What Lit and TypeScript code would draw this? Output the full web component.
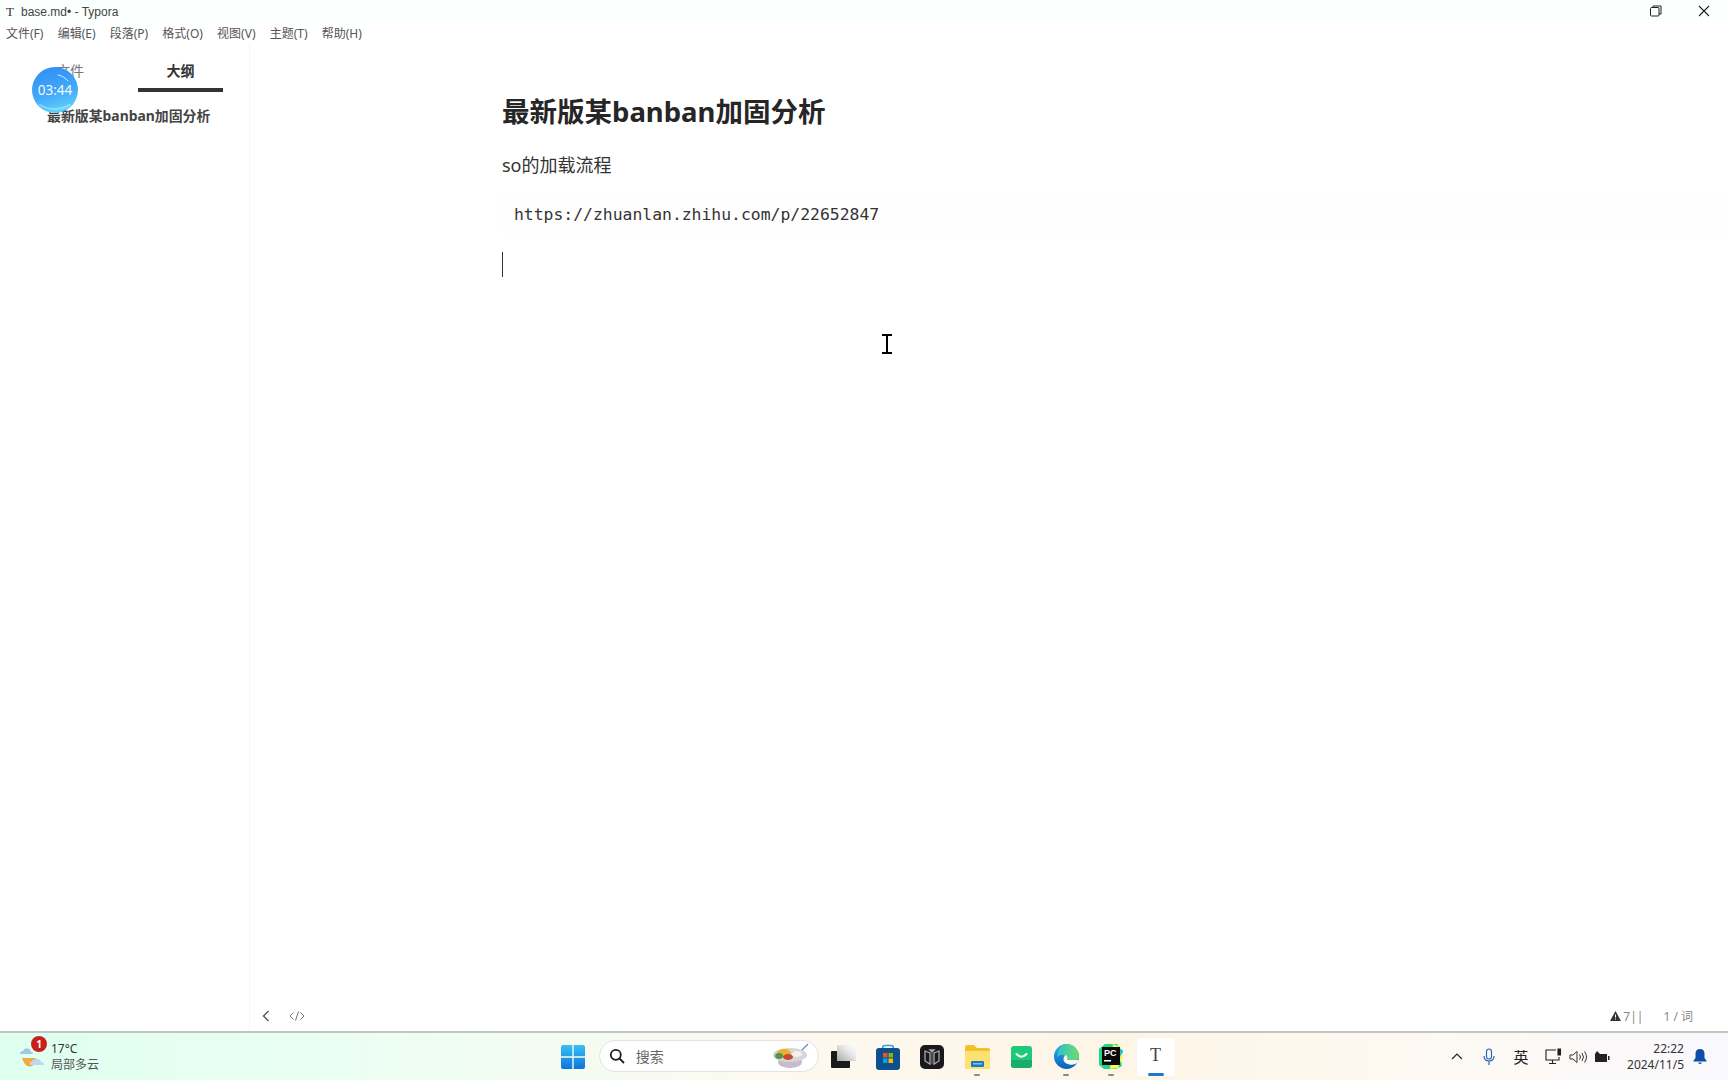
import { LitElement, html, css, svg } from "lit";
import { customElement } from "lit/decorators.js";

const store = svg`<svg width="24" height="26" viewBox="0 0 24 26"><path d="M6.500 6V4q0-2.500 2.500-2.500h6Q17.500 1.500 17.500 4v2" fill="none" stroke="#38a0e0" stroke-width="1.500"/><rect y="4" width="24" height="22" rx="3" fill="#0f4f8f"/><rect x="7" y="9" width="4.500" height="4.500" fill="#f25022"/><rect x="12.500" y="9" width="4.500" height="4.500" fill="#7fba00"/><rect x="7" y="14.500" width="4.500" height="4.500" fill="#00a4ef"/><rect x="12.500" y="14.500" width="4.500" height="4.500" fill="#ffb900"/></svg>`;
const dark = svg`<svg width="24" height="24" viewBox="0 0 24 24"><rect width="24" height="24" rx="5" fill="#19191b"/><path d="M5 6l5 2v11l-5-3zM19 6l-5 2v11l5-3zM10 5h4l-2 2z" fill="none" stroke="#a9a9ab" stroke-width="1.300"/><path d="M12 8v11" stroke="#77777a"/></svg>`;
const folder = svg`<svg width="25" height="24" viewBox="0 0 25 24"><path d="M0 2q0-2 2-2h7l3 3h11q2 0 2 2v17q0 2-2 2H2q-2 0-2-2z" fill="#f5c02e"/><path d="M0 6h25v16q0 2-2 2H2q-2 0-2-2z" fill="#fde272"/><rect x="6" y="16" width="13" height="6" rx="1" fill="#1e78c8"/><rect x="8" y="18" width="9" height="1.500" fill="#7cc0f0"/></svg>`;
const green = svg`<svg width="21" height="22" viewBox="0 0 21 22"><rect width="21" height="22" rx="3" fill="#21c87a"/><path d="M0 14h21v5q0 3-3 3H3q-3 0-3-3z" fill="#18ad68"/><path d="M5.500 8q5 5.500 10 0" fill="none" stroke="#e8fff3" stroke-width="2" stroke-linecap="round"/></svg>`;
const edge = svg`<svg width="25" height="25" viewBox="0 0 25 25"><defs><linearGradient id="eg" x1="0" y1="0" x2="0" y2="1"><stop offset="0" stop-color="#2fb6e6"/><stop offset=".55" stop-color="#1683d8"/><stop offset="1" stop-color="#0f5fb0"/></linearGradient><linearGradient id="eg2" x1="0" y1="0" x2="1" y2="0"><stop offset="0" stop-color="#2fc4c8"/><stop offset="1" stop-color="#6fdc6a"/></linearGradient></defs><circle cx="12.500" cy="12.500" r="12.500" fill="url(#eg)"/><path d="M10 .3A12.500 12.500 0 0 1 25 12.500q0 3.500-4 3.500h-7.500q-.5-4-4-5C6 10 4 12 3.500 14 3 7 6 2 10 .3z" fill="url(#eg2)"/><path d="M9.500 15.500q0-4 3-4.500 1 1.500 1 5h11q-.3 1.500-1 3-4 2.500-8 1.500-6-1.500-6-5z" fill="#fdf6ea"/></svg>`;
const pycharm = svg`<svg width="26" height="27" viewBox="0 0 26 27"><path d="M1 6l6-5h12l6 7-2 9 1 6-6 3H6l-5-4z" fill="#21d789"/><path d="M15 1l8 3 2 9-5 12-8 1z" fill="#fcf84a"/><path d="M20 4l5 4-3 6z" fill="#07c3f2"/><rect x="4" y="4" width="18" height="18" fill="#0a0a0a"/><text x="6" y="13" font-family="Liberation Sans" font-weight="700" font-size="9" fill="#fff">PC</text><rect x="6" y="17" width="7" height="1.500" fill="#fff"/></svg>`;

@customElement("app-root")
export class AppRoot extends LitElement {
  static styles = css`
    :host { display: block; width: 1728px; height: 1080px; position: relative; overflow: hidden; background: #fff;
      font-family: "Noto Sans", "Noto Sans CJK SC", sans-serif; color: #333; }
    .page { display: flex; flex-direction: column; height: 1080px; }
    .titlebar { display: flex; align-items: center; height: 22px; padding: 1px 0 0 6px; box-sizing: border-box; background: #fbfffe; font-size: 12px; color: #444; flex: none;
      font-family: "Liberation Sans", "Noto Sans CJK SC", sans-serif; }
    .t { font-family: "Liberation Serif", serif; font-size: 13px; width: 15px; color: #333; }
    .winbtns { margin-left: auto; display: flex; align-items: center; margin-top: -1px; }
    .winbtn { width: 48px; height: 22px; display: flex; align-items: center; justify-content: center; }
    .menubar { display: flex; gap: 14.200px; height: 22px; padding-left: 6px; align-items: center; font-size: 12px; color: #555; background: #fff; flex: none; }
    .main { flex: 1; display: flex; min-height: 0; }
    .side { width: 250px; flex: none; border-right: 1px solid #f6f6f6; box-sizing: border-box; position: relative; }
    .tabs { display: grid; grid-template-columns: 138px 85px; height: 48px; }
    .tab { font-size: 14px; text-align: center; padding-top: 17px; line-height: 20px; box-sizing: border-box; color: #777; }
    .tab.file { padding-left: 2px; }
    .tab.on { font-weight: 700; color: #333; border-bottom: 4px solid #333; }
    .outline { padding: 14px 0 0 47px; font-size: 13.900px; font-weight: 700; line-height: 20px; color: #444; }
    .bubble { position: absolute; left: 32px; top: 23px; width: 46px; height: 46px; border-radius: 50%;
      background: linear-gradient(165deg, #2f8df5 0%, #42a8f9 55%, #6cdcfc 100%); color: #f2faff; font-size: 13.500px;
      display: flex; align-items: center; justify-content: center; overflow: hidden; }
    .gloss { position: absolute; left: 0; top: 0; }
    .editor { flex: 1; display: flex; flex-direction: column; min-width: 0; }
    .doc { flex: 1; padding: 47px 0 0 252px; }
    h1 { margin: 0; font-size: 27.500px; line-height: 42px; font-weight: 700; color: #262626; }
    p { margin: 18px 0 0; font-size: 18px; line-height: 28px; color: #333; }
    .code { margin-top: 13px; height: 44px; padding-left: 12px; display: flex; align-items: center; background: #fefefe;
      font-family: "DejaVu Sans Mono", monospace; font-size: 16.400px; color: #333; }
    .caret { margin-top: 16px; width: 1px; height: 25px; background: #333; }
    .foot { height: 38px; flex: none; display: flex; align-items: center; padding: 8px 35px 0 11px; box-sizing: border-box; color: #777; }
    .foot .code-ic { margin-left: 18px; }
    .stats { margin-left: auto; display: flex; align-items: center; font-size: 12px; color: #888; }
    .stats .w { margin-right: 2px; }
    .stats .wc { margin-left: 20px; }
    .taskbar { height: 49px; flex: none; box-sizing: border-box; border-top: 2px solid #c2c6c2; display: flex; align-items: center;
      background: linear-gradient(90deg, #deffef 0%, #eafff4 18%, #fdf9f0 45%, #fdf5e6 65%, #fdf9f2 82%, #f9f8fd 100%); position: relative; }
    .weather { width: 551px; flex: none; display: flex; align-items: center; padding-left: 19px; box-sizing: border-box; position: relative; }
    .wtext { margin-left: 6px; font-size: 12px; line-height: 16px; color: #333; }
    .wtext div:last-child { color: #555; }
    .badge { position: absolute; left: 31px; top: -5px; width: 16px; height: 16px; border-radius: 50%; background: #c8201c; color: #fff;
      font-size: 10px; font-weight: 700; display: flex; align-items: center; justify-content: center; }
    .cell { width: 44.700px; height: 47px; flex: none; display: flex; align-items: center; justify-content: center; position: relative; box-sizing: border-box; }
    .dot::after { content: ""; position: absolute; left: 19px; bottom: 4px; width: 6px; height: 2px; border-radius: 1px; background: #8a8a8a; }
    .search { width: 220px; height: 32px; flex: none; margin: -2px 2px 0 3px; box-sizing: border-box; border: 1px solid #e2e2e0; border-radius: 16px; background: #fff;
      display: flex; align-items: center; padding-left: 9px; font-size: 14px; color: #666; }
    .search span { margin-left: 11px; }
    .search svg:last-child { margin-left: auto; margin-right: 8px; }
    .active { width: 38px; height: 38px; margin: 0 3px; background: #fff; border-radius: 4px; font-family: "Liberation Serif", serif; font-size: 18px; color: #444; padding-bottom: 3px; }
    .active::after { content: ""; position: absolute; left: 11px; bottom: 0; width: 16px; height: 3px; border-radius: 2px; background: #1a78d0; }
    .tray { position: absolute; right: 12px; top: 0; height: 47px; display: flex; align-items: center; }
    .tray .ti { display: flex; align-items: center; justify-content: center; height: 47px; }
    .i32 { width: 32px; }
    .i18 { width: 18px; }
    .i30 { width: 30px; }
    .lang { font-size: 15px; color: #222; width: 32px; }
    .clock { font-size: 12px; line-height: 16px; text-align: right; color: #333; width: 58px; margin-left: 9px; }
    .bell { width: 32px; }
    .cursor { position: absolute; left: 882px; top: 334px; }
  `;

  render() {
    return html`
      <div class="page">
        <div class="titlebar">
          <span class="t">T</span><span>base.md• - Typora</span>
          <div class="winbtns">
            <div class="winbtn"><svg width="12" height="12" viewBox="0 0 12 12" fill="none" stroke="#222"><rect x=".5" y="2.500" width="8.500" height="8.500" rx="1"/><path d="M3 2.500V1h8v8H9"/></svg></div>
            <div class="winbtn"><svg width="12" height="12" viewBox="0 0 12 12" stroke="#222" stroke-width="1.100"><path d="M1 1l10 10M11 1L1 11"/></svg></div>
          </div>
        </div>
        <div class="menubar">
          <span>文件(F)</span><span>编辑(E)</span><span>段落(P)</span><span>格式(O)</span><span>视图(V)</span><span>主题(T)</span><span>帮助(H)</span>
        </div>
        <div class="main">
          <aside class="side">
            <div class="tabs"><div class="tab file">文件</div><div class="tab on">大纲</div></div>
            <div class="outline">最新版某banban加固分析</div>
            <div class="bubble">
              <svg class="gloss" width="46" height="46" viewBox="0 0 46 46" fill="none" stroke="#fff" stroke-linecap="round"><path d="M26 8q6 1 10 6" stroke-opacity=".8"/><path d="M8 38q14 8 30 0" stroke="#9ff0ff" stroke-opacity=".6" stroke-width="2"/></svg>
              03:44
            </div>
          </aside>
          <section class="editor">
            <div class="doc">
              <h1>最新版某banban加固分析</h1>
              <p>so的加载流程</p>
              <div class="code">https://zhuanlan.zhihu.com/p/22652847</div>
              <div class="caret"></div>
            </div>
            <div class="foot">
              <svg width="10" height="12" viewBox="0 0 10 12" fill="none" stroke="#555" stroke-width="1.400"><path d="M7.500 1L2.500 6l5 5"/></svg>
              <svg class="code-ic" width="16" height="12" viewBox="0 0 16 12" fill="none" stroke="#777"><path d="M4.500 2.500L1 6l3.500 3.500M11.500 2.500L15 6l-3.500 3.500M9.500 1.500l-3 9"/></svg>
              <div class="stats">
                <svg class="w" width="11" height="10" viewBox="0 0 11 10"><path d="M5.500 0L11 10H0z" fill="#333"/><path d="M5.500 3.500v3M5.500 7.500v1" stroke="#fff"/></svg>
                <span>7||</span><span class="wc">1 / 词</span>
              </div>
            </div>
          </section>
        </div>
        <footer class="taskbar">
          <div class="weather">
            <svg width="26" height="26" viewBox="0 0 26 26"><path d="M1 10q0-3 3-3 2-4 6-2 2 1 2 3 2 0 2 2z" fill="#a4c4e8"/><path d="M3 14h13l3 2q-4 8-11 6-3-2-5-8z" fill="#f6a93b"/><path d="M11 21q-1-3 2-4 2-3 6-2 3 1 3 3 3 0 3 3z" fill="#b9d6f2"/></svg>
            <div class="wtext"><div>17°C</div><div>局部多云</div></div>
            <div class="badge">1</div>
          </div>
          <div class="cell">
            <svg width="24" height="24" viewBox="0 0 24 24"><defs><linearGradient id="wl" x1="0" y1="0" x2="0" y2="1"><stop offset="0" stop-color="#38c0f5"/><stop offset="1" stop-color="#0f74dc"/></linearGradient></defs><path d="M2 0h9.300v11.300H0V2q0-2 2-2zM12.700 0H22q2 0 2 2v9.300H12.700zM0 12.700h11.300V24H2q-2 0-2-2zM12.700 12.700H24V22q0 2-2 2h-9.300z" fill="url(#wl)"/></svg>
          </div>
          <div class="search">
            <svg width="16" height="16" viewBox="0 0 16 16" fill="none" stroke="#1c1c1c" stroke-width="1.800"><circle cx="6.800" cy="6.800" r="5"/><path d="M10.500 10.500L15 15"/></svg>
            <span>搜索</span>
            <svg width="38" height="26" viewBox="0 0 38 26"><path d="M29 8l7-7" stroke="#6b93c8" stroke-width="1.500"/><ellipse cx="18" cy="19" rx="12" ry="6" fill="#c4bcc8"/><ellipse cx="18" cy="12" rx="17" ry="7" fill="#d8d4d8"/><ellipse cx="12" cy="10" rx="7" ry="4" fill="#e8b030"/><ellipse cx="7" cy="13" rx="4" ry="3" fill="#4a9848"/><ellipse cx="16" cy="14" rx="5" ry="3" fill="#c84830"/><ellipse cx="25" cy="11" rx="5" ry="3" fill="#f4f0ec"/></svg>
          </div>
          <div class="cell">
            <svg width="25" height="23" viewBox="0 0 25 23"><defs><linearGradient id="pn" x1="0" y1="1" x2="1" y2="0"><stop offset="0" stop-color="#a8a8a8"/><stop offset=".6" stop-color="#e8e8e8"/><stop offset="1" stop-color="#fff"/></linearGradient></defs><rect y="6" width="19" height="17" rx="1" fill="#1a1a1a"/><rect x="6" width="19" height="16" fill="url(#pn)"/></svg>
          </div>
          <div class="cell">${store}</div>
          <div class="cell">${dark}</div>
          <div class="cell dot">${folder}</div>
          <div class="cell">${green}</div>
          <div class="cell dot">${edge}</div>
          <div class="cell dot">${pycharm}</div>
          <div class="cell active">T</div>
          <div class="tray">
            <div class="ti i32"><svg width="12" height="7" viewBox="0 0 12 7" fill="none" stroke="#222" stroke-width="1.200"><path d="M1 6l5-5 5 5"/></svg></div>
            <div class="ti i32"><svg width="12" height="18" viewBox="0 0 12 18" fill="none" stroke="#2b66b8" stroke-width="1.200"><rect x="3.500" y="1" width="5" height="10" rx="2.500"/><path d="M1 8q0 5 5 5t5-5M6 13v4"/></svg></div>
            <div class="ti lang">英</div>
            <div class="ti i32"><svg width="17" height="17" viewBox="0 0 17 17" fill="none" stroke="#222" stroke-width="1.100"><path d="M11 2H1v10h13V9M7.500 12v3M4 15.500h7"/><path d="M13 1h2.500v6H13z" fill="#222"/></svg></div>
            <div class="ti i18"><svg width="18" height="14" viewBox="0 0 18 14" fill="none" stroke="#333"><path d="M1 5v4h3l4 3.500v-11L4 5z"/><path d="M10.500 4.500q2 2.500 0 5M13 3q3 4 0 8M15.500 1.500q4 5.500 0 11"/></svg></div>
            <div class="ti i30"><svg width="16" height="12" viewBox="0 0 16 12"><path d="M1 3h12v8H1z" fill="#222"/><path d="M1 3L3 0l3 3z" fill="#222"/><rect x="14" y="5" width="1.500" height="4" fill="#222"/></svg></div>
            <div class="clock"><div>22:22</div><div>2024/11/5</div></div>
            <div class="ti bell"><svg width="14" height="16" viewBox="0 0 14 16"><path d="M7 0q-4.500 0-4.500 5v4L0 12.500h14L11.500 9V5Q11.500 0 7 0z" fill="#0e4ea8"/><path d="M5 13.500q2 3 4 0z" fill="#0e4ea8"/></svg></div>
          </div>
        </footer>
      </div>
      <svg class="cursor" width="10" height="20" viewBox="0 0 10 20" fill="none" stroke="#000" stroke-width="2"><path d="M0 1h10M5 1v18M0 19h10"/></svg>
    `;
  }
}
